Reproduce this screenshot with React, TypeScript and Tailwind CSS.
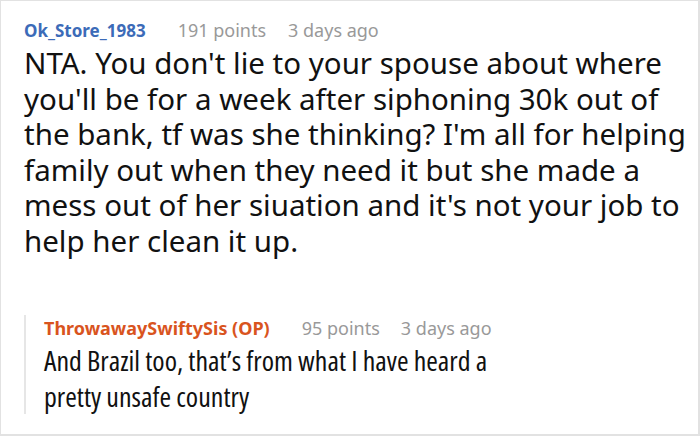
export default function App() {
  return (
    <div className="w-[700px] h-[436px] bg-white border border-[#e2e2e2] border-r-2 border-b-2 overflow-hidden font-['Noto_Sans','Open_Sans',sans-serif]">
      <div className="pl-[23px] pr-[12px] pt-[16px]">
        <div className="flex items-baseline leading-[26px]">
          <span className="text-[17px] font-bold text-[#3c6bb8]">Ok_Store_1983</span>
          <span className="ml-[32px] text-[18px] text-[#999]">191 points</span>
          <span className="ml-[22px] text-[18px] text-[#999]">3 days ago</span>
        </div>
        <p className="mt-[1px] text-[29.5px] leading-[35.5px] text-[#111]">
          NTA. You don't lie to your spouse about where you'll be for a week after siphoning 30k out of the bank, tf was she thinking? I'm all for helping family out when they need it but she made a mess out of her siuation and it's not your job to help her clean it up.
        </p>
        <div className="mt-[67px] border-l-2 border-[#e6e6e6] pl-[18px]">
          <div className="-mt-[10px] flex items-baseline text-[18px] leading-[26px]">
            <span className="font-bold text-[#d9541e]">ThrowawaySwiftySis (OP)</span>
            <span className="ml-[32px] text-[#999]">95 points</span>
            <span className="ml-[21px] text-[#999]">3 days ago</span>
          </div>
          <p className="mt-[1px] max-w-[470px] font-['Open_Sans',sans-serif] text-[28px] leading-[36px] text-[#111] [font-stretch:condensed]">
            And Brazil too, that’s from what I have heard a pretty unsafe country
          </p>
        </div>
      </div>
    </div>
  );
}
